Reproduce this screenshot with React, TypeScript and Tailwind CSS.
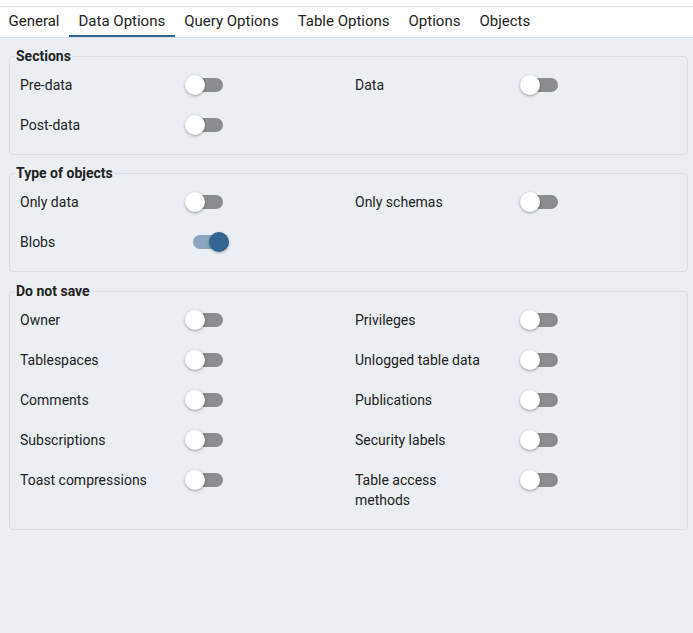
import React from "react";

const tabs = ["General", "Data Options", "Query Options", "Table Options", "Options", "Objects"];

type Item = { label: string; on?: boolean };

const sections: { title: string; items: Item[] }[] = [
  {
    title: "Sections",
    items: [{ label: "Pre-data" }, { label: "Data" }, { label: "Post-data" }],
  },
  {
    title: "Type of objects",
    items: [{ label: "Only data" }, { label: "Only schemas" }, { label: "Blobs", on: true }],
  },
  {
    title: "Do not save",
    items: [
      { label: "Owner" },
      { label: "Privileges" },
      { label: "Tablespaces" },
      { label: "Unlogged table data" },
      { label: "Comments" },
      { label: "Publications" },
      { label: "Subscriptions" },
      { label: "Security labels" },
      { label: "Toast compressions" },
      { label: "Table access methods" },
    ],
  },
];

function Toggle({ on }: { on?: boolean }) {
  if (on) {
    return (
      <div className="relative w-[38px] h-[20px] ml-[8px] shrink-0">
        <div className="absolute left-0 top-[3px] w-[34px] h-[14px] rounded-full bg-[#8ba6bf]" />
        <div className="absolute left-[16px] top-0 w-[20px] h-[20px] rounded-full bg-[#326690] shadow-[0_1px_3px_rgba(0,0,0,0.3)]" />
      </div>
    );
  }
  return (
    <div className="relative w-[38px] h-[20px] shrink-0">
      <div className="absolute left-[4px] top-[3px] w-[34px] h-[14px] rounded-full bg-[#8c8c90]" />
      <div className="absolute left-0 top-0 w-[20px] h-[20px] rounded-full bg-white shadow-[0_1px_3px_rgba(0,0,0,0.35)]" />
    </div>
  );
}

export default function App() {
  return (
    <div
      className="w-[693px] h-[633px] bg-white text-[14px] text-[#222222] overflow-hidden flex flex-col"
      style={{ fontFamily: "Roboto, 'Liberation Sans', sans-serif" }}
    >
      <div className="h-[6px] bg-white" />
      <div className="flex h-[32px] bg-white border-t border-b border-[#dde0e6] text-[15px]">
        {tabs.map((t) => (
          <div
            key={t}
            className={`px-[9.5px] flex items-center leading-[20px] border-b-2 first:-ml-[1px] ${
              t === "Data Options" ? "border-[#326690]" : "border-transparent"
            }`}
          >
            {t}
          </div>
        ))}
      </div>
      <div className="flex-1 bg-[#ebeef3] pt-[10px]">
        {sections.map((s, i) => (
          <fieldset
            key={s.title}
            className={`ml-[9px] mr-[5px] border border-[#dadde3] rounded-[4px] pl-[5px] pr-[5px] pb-[9px] ${
              i === 0 ? "mb-[10px]" : "mb-[11px]"
            }`}
          >
            <legend className="font-bold px-[1px] leading-[17px] text-[14px] text-[#222222]">{s.title}</legend>
            <div className="grid grid-cols-[335px_1fr] pl-[5px]">
              {s.items.map((it) => (
                <div key={it.label} className="flex items-start py-[10px]">
                  <div className="w-[165px] leading-[20px] pr-[30px]">{it.label}</div>
                  <Toggle on={it.on} />
                </div>
              ))}
            </div>
          </fieldset>
        ))}
      </div>
    </div>
  );
}
